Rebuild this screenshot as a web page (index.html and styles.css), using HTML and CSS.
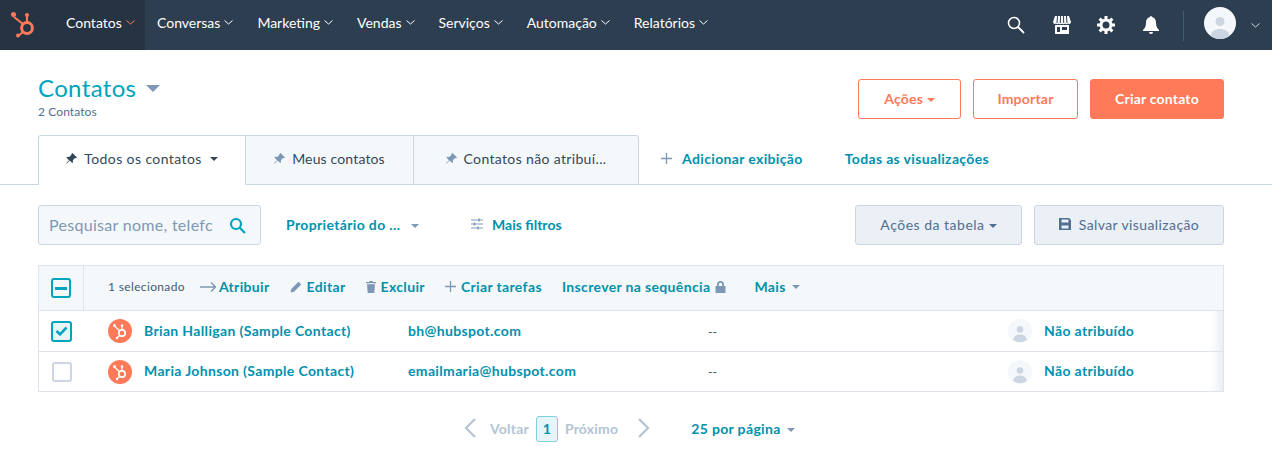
FILE: index.html
```html
<!DOCTYPE html>
<html lang="pt">
<head>
    <meta charset="UTF-8">
    <title>Contatos</title>
    <link rel="stylesheet" href="styles.css">
</head>
<body>
    <!-- Top navigation -->
    <nav class="topbar">
        <div class="nav-left">
            <div class="nav-active">
                <a class="nav-logo">
                    <svg width="26" height="28" viewBox="0 0 26 28" fill="none" stroke="#ff7a59"><circle cx="17" cy="18" r="5.4" stroke-width="3"/><path d="M17 12V6M13 14L4 7M13 22L8 26" stroke-width="2"/><circle cx="17" cy="5" r="2" fill="#ff7a59" stroke="none"/><circle cx="3.500" cy="4.500" r="2.500" fill="#ff7a59" stroke="none"/><circle cx="8" cy="25.500" r="2" fill="#ff7a59" stroke="none"/></svg>
                </a>
                <a class="nav-item nav-item-active">Contatos <svg class="chev" width="9" height="5" viewBox="0 0 9 5"><path d="M.5.500l4 3.500 4-3.500" fill="none" stroke="#ff7a59"/></svg></a>
            </div>
            <a class="nav-item">Conversas <svg class="chev" width="9" height="5" viewBox="0 0 9 5"><path d="M.5.500l4 3.500 4-3.500" fill="none" stroke="#fff"/></svg></a>
            <a class="nav-item">Marketing <svg class="chev" width="9" height="5" viewBox="0 0 9 5"><path d="M.5.500l4 3.500 4-3.500" fill="none" stroke="#fff"/></svg></a>
            <a class="nav-item">Vendas <svg class="chev" width="9" height="5" viewBox="0 0 9 5"><path d="M.5.500l4 3.500 4-3.500" fill="none" stroke="#fff"/></svg></a>
            <a class="nav-item">Serviços <svg class="chev" width="9" height="5" viewBox="0 0 9 5"><path d="M.5.500l4 3.500 4-3.500" fill="none" stroke="#fff"/></svg></a>
            <a class="nav-item">Automação <svg class="chev" width="9" height="5" viewBox="0 0 9 5"><path d="M.5.500l4 3.500 4-3.500" fill="none" stroke="#fff"/></svg></a>
            <a class="nav-item">Relatórios <svg class="chev" width="9" height="5" viewBox="0 0 9 5"><path d="M.5.500l4 3.500 4-3.500" fill="none" stroke="#fff"/></svg></a>
        </div>
        <div class="nav-right">
            <svg class="nav-search" width="18" height="18" viewBox="0 0 18 18" fill="none" stroke="#fff"><circle cx="7" cy="7" r="5.500" stroke-width="1.500"/><path d="M11 11l6 6" stroke-width="1.800"/></svg>
            <svg class="nav-store" width="18" height="18" viewBox="0 0 18 18"><path d="M2 0h14l2 6a2 2 0 0 1-3 1.600 2.500 2.500 0 0 1-3 0 2.500 2.500 0 0 1-3 0 2.500 2.500 0 0 1-3 0 2.500 2.500 0 0 1-3 0A2 2 0 0 1 0 6z" fill="#fff"/><path d="M4.500 0L4 7M7.500 0L7.300 7M10.500 0l.2 7M13.500 0l.5 7" stroke="#2d3e50"/><path d="M2 9h14v9H2z" fill="#fff"/><path d="M4 11h3v5H4zM9 11h5v3H9z" fill="#2d3e50"/></svg>
            <svg class="nav-gear" width="18" height="18" viewBox="0 0 18 18" fill="none" stroke="#fff"><circle cx="9" cy="9" r="5" stroke-width="3"/><path d="M9 0v4M9 14v4M0 9h4M14 9h4M2.600 2.600l2.800 2.800M12.600 12.600l2.800 2.800M2.600 15.400l2.800-2.800M12.600 5.400l2.800-2.800" stroke-width="3"/></svg>
            <svg class="nav-bell" width="16" height="18" viewBox="0 0 16 18" fill="#fff"><path d="M8 0a2 2 0 0 1 1.500 1.200C12 2 13 4 13 7c0 3 1 5 3 7v1H0v-1c2-2 3-4 3-7 0-3 1-5 3.500-5.800A2 2 0 0 1 8 0z"/><path d="M6 16h4a2 2 0 0 1-4 0z"/></svg>
            <span class="nav-divider"></span>
            <svg class="nav-avatar" width="32" height="32" viewBox="0 0 32 32"><circle cx="16" cy="16" r="16" fill="#f5f8fa"/><circle cx="16" cy="14.500" r="4.500" fill="#cbd6e2"/><path d="M6.500 29c1-5 5-7 9.500-7s8.500 2 9.500 7a16 16 0 0 1-19 0z" fill="#cbd6e2"/></svg>
            <svg class="nav-caret" width="9" height="5" viewBox="0 0 9 5"><path d="M.5.500l4 3.500 4-3.500" fill="none" stroke="#cbd6e2"/></svg>
        </div>
    </nav>

    <!-- Page header -->
    <header class="page-head">
        <div class="head-title">
            <h1>Contatos <span class="title-caret"></span></h1>
            <p>2 Contatos</p>
        </div>
        <div class="head-actions">
            <button class="btn btn-outline btn-acoes">Ações <span class="caret caret-orange"></span></button>
            <button class="btn btn-outline btn-importar">Importar</button>
            <button class="btn btn-solid">Criar contato</button>
        </div>
    </header>

    <!-- View tabs -->
    <div class="tabs">
        <div class="tab tab-active">
            <svg class="pin" width="11" height="11" viewBox="0 0 11 11"><path d="M6.500 0L11 4.500l-1 .7-1-.2-2.200 2.200.2 2-.8.8L3.600 7.400.8 10.500 0 10.200l3-3L.4 4.600l.8-.8 2 .2L5.500 1.800l-.1-1z" fill="#33475b"/></svg>
            Todos os contatos
            <span class="caret caret-dark"></span>
        </div>
        <div class="tab tab-two">
            <svg class="pin" width="11" height="11" viewBox="0 0 11 11"><path d="M6.500 0L11 4.500l-1 .7-1-.2-2.200 2.200.2 2-.8.8L3.600 7.400.8 10.500 0 10.200l3-3L.4 4.600l.8-.8 2 .2L5.500 1.800l-.1-1z" fill="#7c98b6"/></svg>
            Meus contatos
        </div>
        <div class="tab tab-three">
            <svg class="pin" width="11" height="11" viewBox="0 0 11 11"><path d="M6.500 0L11 4.500l-1 .7-1-.2-2.200 2.200.2 2-.8.8L3.600 7.400.8 10.500 0 10.200l3-3L.4 4.600l.8-.8 2 .2L5.500 1.800l-.1-1z" fill="#7c98b6"/></svg>
            Contatos não atribuí...
        </div>
        <a class="link tab-add"><svg width="11" height="11" viewBox="0 0 11 11"><path d="M5.500 0v11M0 5.500h11" stroke="#7c98b6" stroke-width="1.300"/></svg> Adicionar exibição</a>
        <a class="link tab-all">Todas as visualizações</a>
    </div>

    <!-- Filters -->
    <div class="filters">
        <div class="search-box">
            <span class="search-text">Pesquisar nome, telefc</span>
            <svg class="search-icon" width="17" height="17" viewBox="0 0 17 17" fill="none" stroke="#00a4bd" stroke-width="2.200"><circle cx="7" cy="7" r="5"/><path d="M10.500 10.500L16 16"/></svg>
        </div>
        <a class="link owner">Proprietário do ... <span class="caret caret-grey"></span></a>
        <a class="link more-filters">
            <svg width="12" height="12" viewBox="0 0 12 12" stroke="#7c98b6" fill="none"><path d="M0 2h12M0 6h12M0 10h12" stroke-width="1"/><path d="M8 .5v3M3.500 4.500v3M7 8.500v3" stroke-width="1.500"/></svg>
            Mais filtros
        </a>
        <div class="filter-actions">
            <button class="btn btn-grey btn-tabela">Ações da tabela <span class="caret caret-slate"></span></button>
            <button class="btn btn-grey btn-salvar">
                <svg width="12" height="12" viewBox="0 0 12 12"><path d="M0 0h10l2 2v10H0z" fill="#516f90"/><path d="M2.500 1.500h7v3h-7zM2.500 7.500h7v3h-7z" fill="#eaf0f6"/></svg>
                Salvar visualização
            </button>
        </div>
    </div>

    <!-- Contacts table -->
    <div class="table">
        <div class="table-head">
            <div class="cell-check head-check"><span class="box box-mixed"><i></i></span></div>
            <div class="bulk">
                <span class="bulk-count">1 selecionado</span>
                <a class="link bulk-item bulk-first"><svg width="16" height="10" viewBox="0 0 16 10" fill="none" stroke="#7c98b6" stroke-width="1.400"><path d="M0 5h15M11 .5L15.500 5 11 9.500"/></svg>Atribuir</a>
                <a class="link bulk-item"><svg width="12" height="12" viewBox="0 0 12 12"><path d="M8.500.8l2.700 2.700L4 10.700.5 11.500l.8-3.500z" fill="#7c98b6"/></svg>Editar</a>
                <a class="link bulk-item"><svg width="10" height="12" viewBox="0 0 10 12"><path d="M3.500 0h3l.5 1h3v1.300H0V1h3zM1 3.300h8L8.300 12H1.700z" fill="#7c98b6"/></svg>Excluir</a>
                <a class="link bulk-item"><svg width="11" height="11" viewBox="0 0 11 11"><path d="M5.500 0v11M0 5.500h11" stroke="#7c98b6" stroke-width="1.300"/></svg>Criar tarefas</a>
                <a class="link bulk-item">Inscrever na sequência<svg width="11" height="12" viewBox="0 0 11 12"><path d="M2 5V3.500a3.500 3.500 0 0 1 7 0V5h1.500v7H.5V5zm1.800 0h3.400V3.500a1.700 1.700 0 0 0-3.400 0z" fill="#7c98b6" fill-rule="evenodd"/></svg></a>
                <a class="link bulk-item bulk-more">Mais <span class="caret caret-grey"></span></a>
            </div>
        </div>

        <div class="row">
            <div class="cell-check"><span class="box box-checked"><svg width="13" height="10" viewBox="0 0 13 10" fill="none"><path d="M1.500 5l3.500 3.300L11.500 1.500" stroke="#00a4bd" stroke-width="2.600"/></svg></span></div>
            <div class="cell cell-name">
                <svg class="hs-badge" width="24" height="24" viewBox="0 0 24 24"><circle cx="12" cy="12" r="12" fill="#ff7a59"/><g fill="none" stroke="#fff"><circle cx="14" cy="14" r="3.200" stroke-width="1.700"/><path d="M14 11V7M11.800 12L7 7.500M11.500 16.500L9 19" stroke-width="1.200"/></g><circle cx="14" cy="6.500" r="1.200" fill="#fff"/><circle cx="6.500" cy="6.500" r="1.500" fill="#fff"/><circle cx="9" cy="19" r="1.200" fill="#fff"/></svg>
                <a class="link">Brian Halligan (Sample Contact)</a>
            </div>
            <div class="cell"><a class="link">bh@hubspot.com</a></div>
            <div class="cell cell-dash">--</div>
            <div class="cell cell-owner">
                <svg class="owner-avatar" width="24" height="24" viewBox="0 0 24 24"><circle cx="12" cy="12" r="12" fill="#f5f8fa"/><circle cx="12" cy="10.500" r="3.300" fill="#cbd6e2"/><path d="M5 21c.7-3.700 3.500-5.500 7-5.500s6.300 1.800 7 5.500a12 12 0 0 1-14 0z" fill="#cbd6e2"/></svg>
                <a class="link">Não atribuído</a>
            </div>
        </div>

        <div class="row row-last">
            <div class="cell-check"><span class="box"></span></div>
            <div class="cell cell-name">
                <svg class="hs-badge" width="24" height="24" viewBox="0 0 24 24"><circle cx="12" cy="12" r="12" fill="#ff7a59"/><g fill="none" stroke="#fff"><circle cx="14" cy="14" r="3.200" stroke-width="1.700"/><path d="M14 11V7M11.800 12L7 7.500M11.500 16.500L9 19" stroke-width="1.200"/></g><circle cx="14" cy="6.500" r="1.200" fill="#fff"/><circle cx="6.500" cy="6.500" r="1.500" fill="#fff"/><circle cx="9" cy="19" r="1.200" fill="#fff"/></svg>
                <a class="link">Maria Johnson (Sample Contact)</a>
            </div>
            <div class="cell"><a class="link">emailmaria@hubspot.com</a></div>
            <div class="cell cell-dash">--</div>
            <div class="cell cell-owner">
                <svg class="owner-avatar" width="24" height="24" viewBox="0 0 24 24"><circle cx="12" cy="12" r="12" fill="#f5f8fa"/><circle cx="12" cy="10.500" r="3.300" fill="#cbd6e2"/><path d="M5 21c.7-3.700 3.500-5.500 7-5.500s6.300 1.800 7 5.500a12 12 0 0 1-14 0z" fill="#cbd6e2"/></svg>
                <a class="link">Não atribuído</a>
            </div>
        </div>
    </div>

    <!-- Pagination -->
    <div class="pager">
        <svg class="pager-arrow" width="12" height="20" viewBox="0 0 12 20" fill="none"><path d="M11 1L2 10l9 9" stroke="#b4c4d5" stroke-width="2.200"/></svg>
        <span class="pager-word pager-prev">Voltar</span>
        <span class="pager-num">1</span>
        <span class="pager-word pager-next">Próximo</span>
        <svg class="pager-arrow" width="12" height="20" viewBox="0 0 12 20" fill="none"><path d="M1 1l9 9-9 9" stroke="#b4c4d5" stroke-width="2.200"/></svg>
        <a class="link pager-size">25 por página <span class="caret caret-grey"></span></a>
    </div>
</body>
</html>
```

FILE: styles.css
```css
* {
    box-sizing: border-box;
}
body {
    margin: 0;
    background-color: #fff;
    font-family: 'Lato', sans-serif;
    font-size: 14px;
    color: #33475b;
    overflow: hidden;
}
svg {
    flex: none;
}
.link {
    color: #0091ae;
    font-weight: 700;
    font-size: 14px;
    letter-spacing: .35px;
    text-decoration: none;
}

/* top bar */
.topbar {
    display: flex;
    justify-content: space-between;
    height: 50px;
    background-color: #2d3e50;
}
.nav-left, .nav-right, .nav-active {
    display: flex;
    align-items: center;
}
.nav-active {
    height: 50px;
    width: 145px;
    background-color: #253342;
}
.nav-logo {
    display: flex;
    width: 54px;
    padding: 0 0 2px 10px;
}
.nav-item {
    display: flex;
    align-items: center;
    gap: 4px;
    padding: 0 12px 6px;
    color: #fff;
    font-size: 14px;
    white-space: nowrap;
}
.nav-item-active {
    padding-right: 0;
}
.nav-right {
    padding-right: 12px;
}
.nav-search {
    margin-right: 28px;
}
.nav-store {
    margin-right: 26px;
}
.nav-gear {
    margin-right: 28px;
}
.nav-divider {
    width: 1px;
    height: 30px;
    margin: 2px 20px 0 24px;
    background-color: #425b76;
}
.nav-avatar {
    margin: 0 15px 4px 0;
}

/* carets */
.caret {
    display: inline-block;
    width: 0;
    height: 0;
    border-left: 4px solid transparent;
    border-right: 4px solid transparent;
    border-top: 4px solid #7c98b6;
    vertical-align: 2px;
}
.caret-orange {
    border-top-color: #ff7a59;
}
.caret-dark {
    border-top-color: #33475b;
    margin-left: 1px;
}
.caret-slate {
    border-top-color: #516f90;
}
.caret-grey {
    border-top-color: #7c98b6;
}

/* page header */
.page-head {
    display: flex;
    justify-content: space-between;
    padding: 24px 48px 0 38px;
    height: 85px;
}
.page-head h1 {
    margin: 0;
    font-size: 24px;
    font-weight: 400;
    line-height: 28px;
    color: #00a4bd;
    letter-spacing: .35px;
}
.title-caret {
    display: inline-block;
    width: 0;
    height: 0;
    margin-left: 3px;
    border-left: 7.500px solid transparent;
    border-right: 7.500px solid transparent;
    border-top: 7.500px solid #7c98b6;
    vertical-align: 5px;
}
.page-head p {
    margin: 2px 0 0;
    font-size: 12px;
    line-height: 16px;
    color: #516f90;
    letter-spacing: .1px;
}
.head-actions {
    display: flex;
    gap: 12px;
    margin-top: 5px;
}
.btn {
    height: 40px;
    padding-bottom: 3px;
    border-radius: 3px;
    font-family: inherit;
    font-size: 14px;
    font-weight: 700;
    letter-spacing: .2px;
}
.btn-outline {
    background-color: #fff;
    border: 1px solid #ff7a59;
    color: #ff7a59;
}
.btn-acoes {
    width: 103px;
}
.btn-importar {
    width: 105px;
}
.btn-solid {
    width: 134px;
    background-color: #ff7a59;
    border: 1px solid #ff7a59;
    color: #fff;
}

/* tabs */
.tabs {
    display: flex;
    align-items: center;
    height: 50px;
    padding-left: 38px;
    border-bottom: 1px solid #cbd6e2;
}
.tab {
    display: flex;
    align-items: center;
    justify-content: center;
    gap: 7px;
    height: 50px;
    padding-bottom: 2px;
    background-color: #f5f8fa;
    border: 1px solid #cbd6e2;
    border-left: none;
    font-size: 14px;
    letter-spacing: .15px;
    white-space: nowrap;
}
.tab-active {
    width: 208px;
    background-color: #fff;
    border-left: 1px solid #cbd6e2;
    border-bottom-color: #fff;
    border-radius: 3px 0 0 0;
    letter-spacing: .4px;
}
.tab-two {
    width: 168px;
}
.tab-three {
    width: 225px;
    border-radius: 0 3px 0 0;
    letter-spacing: .35px;
}
.tab-add {
    display: flex;
    align-items: center;
    gap: 10px;
    margin: 0 0 2px 22px;
}
.tab-all {
    margin: 0 0 2px 42px;
}

/* filter row */
.filters {
    display: flex;
    align-items: center;
    height: 40px;
    margin: 20px 48px 0 38px;
}
.search-box {
    display: flex;
    align-items: center;
    justify-content: space-between;
    width: 223px;
    height: 40px;
    padding: 0 14px 0 10px;
    background-color: #f5f8fa;
    border: 1px solid #cbd6e2;
    border-radius: 3px;
}
.search-text {
    padding-bottom: 2px;
    font-size: 16px;
    letter-spacing: .3px;
    white-space: nowrap;
    color: #7c98b6;
}
.search-icon {
    margin-top: 1px;
}
.owner {
    width: 185px;
    margin: 0 0 2px 25px;
}
.owner .caret {
    margin-left: 7px;
}
.more-filters {
    display: flex;
    align-items: center;
    gap: 9px;
    margin-bottom: 2px;
    letter-spacing: 0;
}
.filter-actions {
    display: flex;
    gap: 12px;
    margin-left: auto;
}
.btn-grey {
    background-color: #eaf0f6;
    border: 1px solid #cbd6e2;
    color: #506e91;
    font-weight: 400;
    letter-spacing: .4px;
}
.btn-tabela {
    width: 167px;
    letter-spacing: .5px;
}
.btn-salvar {
    display: flex;
    align-items: center;
    justify-content: center;
    gap: 8px;
    width: 190px;
}

/* table */
.table {
    margin: 20px 48px 0 38px;
    border: 1px solid #dfe3eb;
}
.table-head {
    display: flex;
    height: 45px;
    background-color: #f5f8fa;
    border-bottom: 1px solid #dfe3eb;
}
.cell-check {
    display: flex;
    align-items: center;
    justify-content: center;
    width: 45px;
    height: 100%;
}
.head-check {
    border-right: 1px solid #dfe3eb;
}
.box {
    display: flex;
    align-items: center;
    justify-content: center;
    width: 20px;
    height: 20px;
    background-color: #fff;
    border: 2px solid #cbd6e2;
    border-radius: 3px;
}
.box-mixed, .box-checked {
    border-color: #00a4bd;
}
.box-checked {
    width: 21px;
    height: 21px;
    background-color: #e5f5f8;
}
.box-mixed {
    background-color: #f5f8fa;
}
.box-mixed i {
    width: 12px;
    height: 3px;
    background-color: #00a4bd;
}
.bulk {
    display: flex;
    align-items: center;
    padding: 0 0 3px 24px;
}
.bulk-count {
    font-size: 12px;
    letter-spacing: .35px;
    color: #425b76;
}
.bulk-item {
    display: flex;
    align-items: center;
    gap: 5px;
    margin-left: 20px;
}
.bulk-first {
    margin-left: 15px;
    gap: 3px;
}
.bulk-more {
    margin-left: 28px;
}
.bulk-more .caret {
    margin-left: 1px;
}
.row {
    display: grid;
    grid-template-columns: 45px 324px 300px 300px 1fr;
    align-items: center;
    height: 41px;
    border-bottom: 1px solid #dfe3eb;
}
.row-last {
    height: 39px;
    border-bottom: none;
}
.row .link {
    display: block;
    margin-bottom: 2px;
}
.cell-name {
    display: flex;
    align-items: center;
    gap: 12px;
    padding-left: 24px;
}
.cell-dash {
    font-size: 12px;
}
.cell-owner {
    display: flex;
    align-items: center;
    gap: 12px;
    height: 100%;
    background-image: linear-gradient(to right, rgba(255, 255, 255, 0) 94%, #eaeff5 100%);
}

/* pagination */
.pager {
    display: flex;
    align-items: center;
    margin-top: 24px;
    padding-left: 464px;
}
.pager-arrow {
    margin-bottom: 2px;
}
.pager-word {
    padding-bottom: 2px;
    font-weight: 700;
    color: #b4c4d5;
    letter-spacing: .2px;
}
.pager-prev {
    margin-left: 14px;
}
.pager-num {
    display: flex;
    align-items: center;
    justify-content: center;
    width: 22px;
    height: 26px;
    padding-bottom: 2px;
    margin: 0 7px;
    background-color: #e5f5f8;
    border: 1px solid #7fd1de;
    border-radius: 3px;
    font-weight: 700;
    color: #0091ae;
}
.pager-next {
    margin-right: 20px;
}
.pager-size {
    margin: 0 0 2px 41px;
}
.pager-size .caret {
    margin-left: 3px;
}
```
